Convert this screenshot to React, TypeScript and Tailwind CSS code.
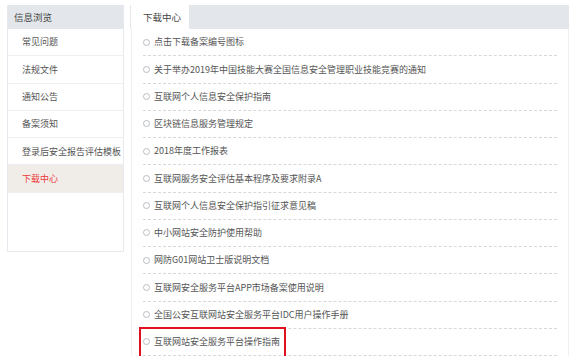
const menu = ['常见问题', '法规文件', '通知公告', '备案须知', '登录后安全报告评估模板', '下载中心']

const files = [
  '点击下载备案编号图标',
  '关于举办2019年中国技能大赛全国信息安全管理职业技能竞赛的通知',
  '互联网个人信息安全保护指南',
  '区块链信息服务管理规定',
  '2018年度工作报表',
  '互联网服务安全评估基本程序及要求附录A',
  '互联网个人信息安全保护指引征求意见稿',
  '中小网站安全防护使用帮助',
  '网防G01网站卫士版说明文档',
  '互联网安全服务平台APP市场备案使用说明',
  '全国公安互联网站安全服务平台IDC用户操作手册',
  '互联网站安全服务平台操作指南',
]

export default function App() {
  return (
    <div className="h-[356px] w-[576px] overflow-hidden bg-white font-['Noto_Sans_CJK_SC','Noto_Sans',sans-serif] text-[9px] text-[#555]">
      <div className="flex items-start gap-[6px] pl-[7px] pt-[5px]">
        <aside className="h-[247px] w-[117px] border border-t-0 border-[#e6eaee] bg-white">
          <div className="flex h-[24px] items-center bg-[#e3e7eb] pl-[6px] text-[9.5px] text-[#444]">信息浏览</div>
          {menu.map((m, i) => (
            <div
              key={m}
              className={
                'flex h-[27.3px] items-center border-b border-[#edf0f2] pl-[14px] ' +
                (i === menu.length - 1 ? 'bg-[#f0ede9] text-[#ee3a3a]' : '')
              }
            >
              {m}
            </div>
          ))}
        </aside>

        <section className="relative w-[439px]">
          <div className="flex h-[24px] bg-[#e3e7eb]">
            <div className="ml-px flex w-[58px] items-center bg-white pl-[12px] text-[9.5px] text-[#444]">下载中心</div>
          </div>
          <div className="ml-px h-[330px] border-x border-[#eef1f4] px-[11px]">
            {files.map((f) => (
              <div key={f} className="flex h-[27.25px] items-center gap-[4px] border-b border-dashed border-[#d6d9dc]">
                <span className="h-[7px] w-[7px] shrink-0 rounded-full border border-[#b9bdc1]" />
                <span>{f}</span>
              </div>
            ))}
          </div>
          <div className="absolute left-[9px] top-[322px] h-[40px] w-[147px] border-2 border-[#e0101e]" />
        </section>
      </div>
    </div>
  )
}
